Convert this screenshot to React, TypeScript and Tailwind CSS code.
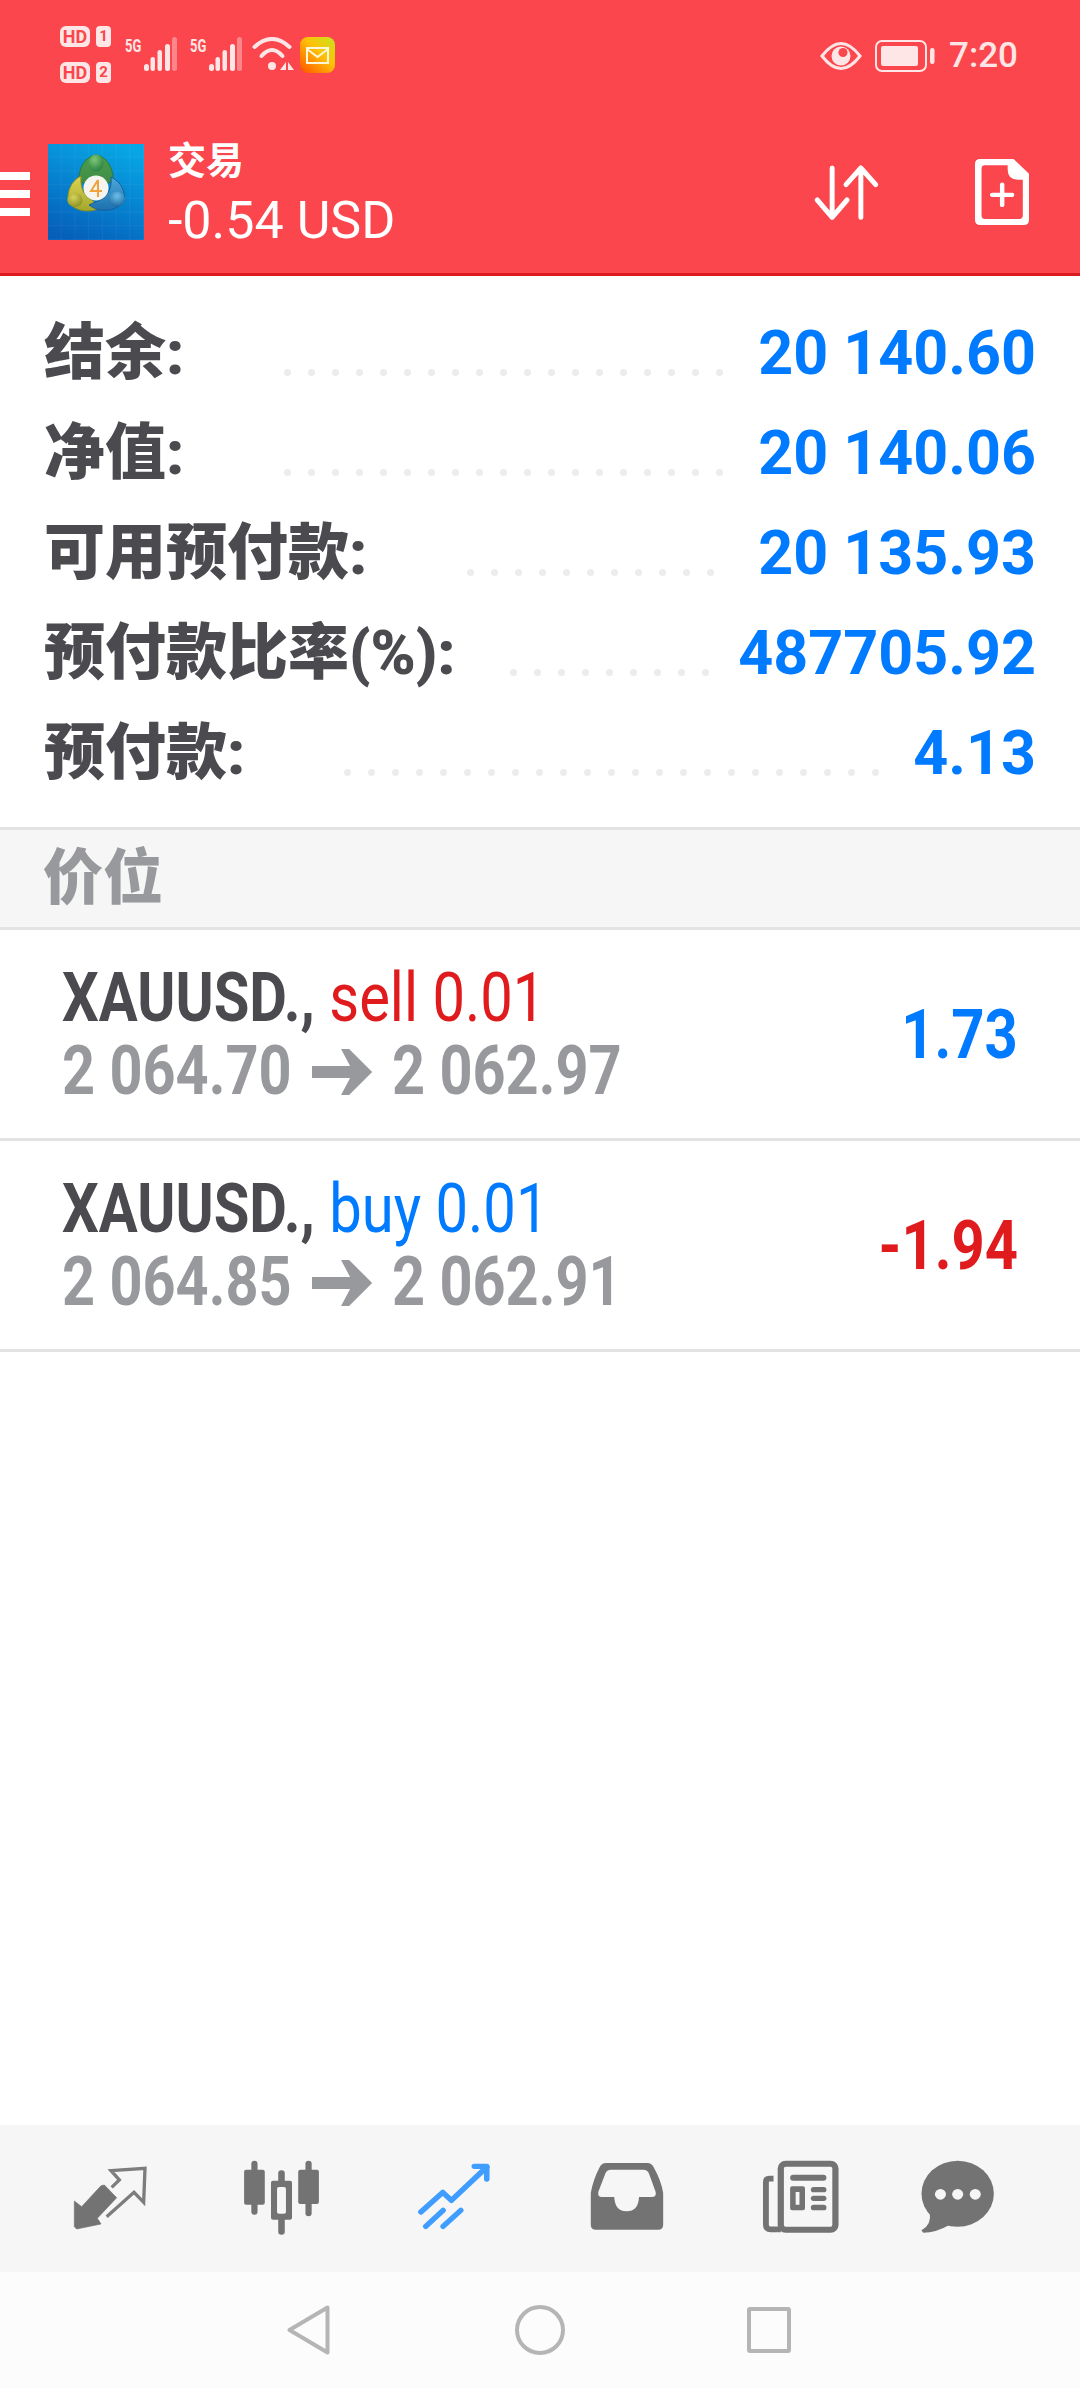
import React from "react";

const infoRows = [
  { label: "结余:", value: "20 140.60", dots: 19, w: "w-[240px]" },
  { label: "净值:", value: "20 140.06", dots: 19, w: "w-[240px]" },
  { label: "可用预付款:", value: "20 135.93", dots: 11, w: "w-[423px]" },
  { label: "预付款比率(%):", value: "487705.92", dots: 9, w: "w-[466px]" },
  { label: "预付款:", value: "4.13", dots: 23, w: "w-[300px]" },
];

const trades = [
  { side: "sell 0.01", sideCls: "text-[#e01b1e]", from: "2 064.70", to: "2 062.97", pnl: "1.73", pnlCls: "text-[#007aff]" },
  { side: "buy 0.01", sideCls: "text-[#007aff]", from: "2 064.85", to: "2 062.91", pnl: "-1.94", pnlCls: "text-[#e01b1e]" },
];

function HdRow({ n }: { n: string }) {
  return (
    <div className="flex h-[21px] gap-[6px]">
      <div className="flex h-[21px] w-[30px] items-center justify-center rounded-[6px] bg-[#ffe6e6] text-[18px] leading-none font-bold text-[#fa464c]">HD</div>
      <div className="flex h-[21px] w-[15px] items-center justify-center rounded-[4px] bg-[#ffe6e6] text-[15px] leading-none font-bold text-[#fa464c]">{n}</div>
    </div>
  );
}

function Signal() {
  return (
    <div className="flex h-[35px] w-[52px] items-start">
      <span className="w-[17px] origin-left scale-x-[0.72] text-[18px] leading-[17px] font-bold whitespace-nowrap text-[#ffe6e6]">5G</span>
      <svg width="35" height="35" viewBox="0 0 35 35">
        <g fill="#ffe6e6">
          <rect x="2" y="27" width="5" height="7" rx="2.5" />
          <rect x="8.5" y="20" width="4.5" height="14" rx="2.2" />
          <rect x="15.5" y="13" width="4.5" height="21" rx="2.2" />
          <rect x="23" y="7" width="5" height="27" rx="2.5" />
          <rect x="30" y="0" width="5" height="34" rx="2.5" opacity="0.4" />
        </g>
      </svg>
    </div>
  );
}

function Wifi() {
  return (
    <svg width="42" height="36" viewBox="0 0 42 36" className="shrink-0">
      <g fill="none" stroke="#ffe6e6" strokeWidth="4" strokeLinecap="round">
        <path d="M2.5 10 Q20 -6 37.5 10" />
        <path d="M9.5 19 Q20 7 30.5 19" />
      </g>
      <circle cx="20" cy="29" r="4" fill="#ffe6e6" />
      <path d="M34 25 V33 H28 Z M36 25 L42 33 H36 Z" fill="#ffe6e6" />
    </svg>
  );
}

function Mail() {
  return (
    <svg width="35" height="36" viewBox="0 0 35 36" className="shrink-0">
      <defs>
        <linearGradient id="mailG" x1="1" y1="0" x2="0.1" y2="1">
          <stop offset="0" stopColor="#c4e61e" />
          <stop offset="0.45" stopColor="#ffc107" />
          <stop offset="1" stopColor="#ff5a00" />
        </linearGradient>
      </defs>
      <rect width="35" height="36" rx="8" fill="url(#mailG)" />
      <rect x="7" y="11" width="21" height="15" fill="none" stroke="#fff8d8" strokeWidth="2" />
      <path d="M7 12 L17.5 20 L28 12" fill="none" stroke="#fff8d8" strokeWidth="2" />
    </svg>
  );
}

function Eye() {
  return (
    <svg width="42" height="28" viewBox="0 0 42 28">
      <path d="M2 14 Q21 -11 40 14 Q21 39 2 14 Z" fill="none" stroke="#ffe6e6" strokeWidth="3" />
      <circle cx="21" cy="14" r="9.5" fill="#ffe6e6" />
      <circle cx="23" cy="10.5" r="4.5" fill="#fa464c" />
    </svg>
  );
}

function Battery() {
  return (
    <svg width="60" height="32" viewBox="0 0 60 32">
      <rect x="1" y="1" width="50" height="30" rx="6" fill="none" stroke="#ffe6e6" strokeWidth="2" />
      <rect x="6" y="6" width="37" height="20" rx="2" fill="#ffe6e6" />
      <rect x="55" y="8" width="4.5" height="16" rx="2.2" fill="#ffe6e6" />
    </svg>
  );
}

function Logo() {
  return (
    <svg width="96" height="96" viewBox="0 0 96 96" className="shrink-0">
      <defs>
        <linearGradient id="bg" x1="0.7" y1="0" x2="0.3" y2="1">
          <stop offset="0" stopColor="#07a6e4" />
          <stop offset="1" stopColor="#0560bc" />
        </linearGradient>
        <pattern id="gr" width="13.7" height="13.7" patternUnits="userSpaceOnUse">
          <path d="M13.7 0 V13.7 H0" fill="none" stroke="#ffffff" strokeOpacity="0.09" strokeWidth="1" />
        </pattern>
        <linearGradient id="gn" x1="0" y1="0" x2="0" y2="1">
          <stop offset="0" stopColor="#4f9c4c" />
          <stop offset="1" stopColor="#3a8a46" />
        </linearGradient>
        <linearGradient id="yl" x1="0" y1="0" x2="0" y2="1">
          <stop offset="0" stopColor="#ded552" />
          <stop offset="1" stopColor="#a3a62c" />
        </linearGradient>
        <linearGradient id="bl" x1="0" y1="0" x2="0" y2="1">
          <stop offset="0" stopColor="#4ea9da" />
          <stop offset="1" stopColor="#1c70ae" />
        </linearGradient>
        <radialGradient id="ball1" cx="0.4" cy="0.3" r="0.8">
          <stop offset="0" stopColor="#7fc777" />
          <stop offset="1" stopColor="#1f7a3a" />
        </radialGradient>
        <radialGradient id="ball2" cx="0.4" cy="0.3" r="0.8">
          <stop offset="0" stopColor="#d8d25a" />
          <stop offset="1" stopColor="#848a1e" />
        </radialGradient>
        <radialGradient id="ball3" cx="0.5" cy="0.3" r="0.8">
          <stop offset="0" stopColor="#6cc0ea" />
          <stop offset="1" stopColor="#14609c" />
        </radialGradient>
      </defs>
      <rect width="96" height="96" fill="url(#bg)" />
      <rect width="96" height="96" fill="url(#gr)" />
      <path d="M48 11 C58 12 66 24 65 37 L48 44 L31 37 C30 24 38 12 48 11 Z" fill="url(#gn)" stroke="#2c7a3c" strokeWidth="1" />
      <path d="M33 32 C23 37 19 47 20 58 C28 68 42 69 52 64 L44 56 C36 52 32 44 33 32 Z" fill="url(#yl)" stroke="#8a8d22" strokeWidth="1" />
      <path d="M63 33 C73 38 78 47 76 58 C66 68 52 69 41 61 L52 56 C60 52 64 44 63 33 Z" fill="url(#bl)" stroke="#155f9a" strokeWidth="1" />
      <ellipse cx="48" cy="19" rx="7.5" ry="8.5" fill="url(#ball1)" />
      <ellipse cx="27" cy="56" rx="7.5" ry="7" fill="url(#ball2)" />
      <ellipse cx="69" cy="55" rx="8" ry="7.5" fill="url(#ball3)" />
      <circle cx="48" cy="44" r="12.5" fill="#f5f4ee" />
      <path d="M50 36 L43 47 H54 M50 36 V53" fill="none" stroke="#f0a23c" strokeWidth="2" />
    </svg>
  );
}

function NavIcon({ w, vb, children }: { w: number; vb: string; children: React.ReactNode }) {
  return (
    <svg width={w} height="90" viewBox={vb} preserveAspectRatio="none" className="shrink-0">
      {children}
    </svg>
  );
}

function InfoRow({ label, value, dots, w }: { label: string; value: string; dots: number; w: string }) {
  return (
    <div className="flex h-[100px] items-center">
      <div className={`${w} shrink-0 text-[61px] leading-none font-black whitespace-nowrap text-[#4a4a4f]`}>{label}</div>
      <div className="mt-[38px] flex gap-[17px]">
        {Array.from({ length: dots }).map((_, i) => (
          <span key={i} className="h-[7px] w-[7px] rounded-full bg-[#ececec]" />
        ))}
      </div>
      <div className="ml-auto text-[61px] leading-none font-bold whitespace-nowrap text-[#007aff]">{value}</div>
    </div>
  );
}

function Arrow() {
  return (
    <svg width="72" height="46" viewBox="0 0 60 46" preserveAspectRatio="none" className="mx-[24px] inline-block align-[-1px]">
      <path d="M0 17 H38 L29 0 H37 L60 23 L37 46 H29 L38 29 H0 Z" fill="#98999c" />
    </svg>
  );
}

function TradeRow({ t }: { t: (typeof trades)[number] }) {
  return (
    <div className="box-content flex h-[208px] items-center justify-between border-b-[3px] border-[#e3e3e3] pr-[62px] pl-[62px]">
      <div className="flex flex-col">
        <div className="h-[73px] origin-left scale-x-[0.84] text-[69px] leading-[73px] whitespace-nowrap">
          <span className="font-bold text-[#4a4a4f]">XAUUSD.,</span> <span className={t.sideCls}>{t.side}</span>
        </div>
        <div className="h-[73px] origin-left scale-x-[0.836] text-[69px] leading-[73px] font-bold whitespace-nowrap text-[#98999c]">
          {t.from}
          <Arrow />
          {t.to}
        </div>
      </div>
      <div className={`origin-right scale-x-[0.84] text-[69px] leading-none font-bold ${t.pnlCls}`}>{t.pnl}</div>
    </div>
  );
}

export default function App() {
  return (
    <div className="flex h-[2388px] w-[1080px] flex-col overflow-hidden bg-white font-['Roboto','Noto_Sans_CJK_SC',sans-serif]">
      <header className="h-[276px] shrink-0 border-b-[3px] border-[#dd1c22] bg-[#fa464c]">
        <div className="flex h-[110px] items-start pt-[26px] pl-[60px]">
          <div className="flex flex-col gap-[15px]">
            <HdRow n="1" />
            <HdRow n="2" />
          </div>
          <div className="mt-[11px] ml-[14px] flex items-start">
            <Signal />
            <div className="ml-[13px]">
              <Signal />
            </div>
            <div className="ml-[10px]">
              <Wifi />
            </div>
            <div className="ml-[6px]">
              <Mail />
            </div>
          </div>
          <div className="mt-[12px] ml-auto flex items-center pr-[62px]">
            <Eye />
            <div className="ml-[13px]">
              <Battery />
            </div>
            <div className="ml-[14px] text-[35px] leading-none font-medium text-[#ffe6e6]">7:20</div>
          </div>
        </div>
        <div className="flex h-[163px] items-center">
          <div className="mt-[4px] flex w-[30px] shrink-0 flex-col gap-[10px]">
            <div className="h-[8px] bg-white" />
            <div className="h-[8px] bg-white" />
            <div className="h-[8px] bg-white" />
          </div>
          <div className="ml-[18px]">
            <Logo />
          </div>
          <div className="mt-[6px] ml-[24px] flex flex-col text-white">
            <div className="text-[38px] leading-[46px] font-bold">交易</div>
            <div className="mt-[6px] text-[52px] leading-[62px]">-0.54 USD</div>
          </div>
          <svg width="66" height="56" viewBox="790 490 200 168" preserveAspectRatio="none" className="ml-auto">
            <g fill="none" stroke="#fff" strokeWidth="15" strokeLinecap="round" strokeLinejoin="round">
              <path d="M845 502 V650 M800 598 L845 650 L890 598" />
              <path d="M932 650 V502 M887 552 L932 502 L977 552" />
            </g>
          </svg>
          <svg width="54" height="66" viewBox="1263 478 157 197" preserveAspectRatio="none" className="mr-[51px] ml-[95px]">
            <path
              fillRule="evenodd"
              fill="#fff"
              d="M1278 478 H1375 L1420 522 V660 Q1420 675 1405 675 H1278 Q1263 675 1263 660 V493 Q1263 478 1278 478 Z M1292 497 Q1282 497 1282 507 V647 Q1282 657 1292 657 H1392 Q1402 657 1402 647 V540 H1390 Q1358 540 1358 510 V497 Z"
            />
            <path d="M1342 555 V615 M1313 585 H1371" stroke="#fff" strokeWidth="13" strokeLinecap="round" fill="none" />
          </svg>
        </div>
      </header>

      <section className="h-[551px] shrink-0 pt-[27px] pr-[44px] pl-[44px]">
        {infoRows.map((r) => (
          <InfoRow key={r.label} {...r} />
        ))}
      </section>

      <div className="box-content flex h-[97px] shrink-0 items-center border-y-[3px] border-[#e3e3e3] bg-[#f6f6f6] pl-[43px] text-[60px] leading-none font-black text-[#98999c]">
        价位
      </div>

      {trades.map((t) => (
        <TradeRow key={t.pnl} t={t} />
      ))}

      <div className="flex-1" />

      <nav className="flex h-[147px] shrink-0 items-start bg-[#f6f6f6] pt-[30px] pl-[65px]">
        <NavIcon w={90} vb="0 0 270 270">
          <path d="M28 138 L50 155 L108 92 L118 90 L155 128 L97 190 L108 207 L35 222 L28 215 Z" fill="#737373" strokeLinejoin="round" stroke="#737373" strokeWidth="2" />
          <path d="M140 97 L163 75 L138 47 L240 40 L236 142 L207 112 L125 185" fill="none" stroke="#7d7d7d" strokeWidth="10" />
        </NavIcon>
        <div className="ml-[86px]">
          <NavIcon w={81} vb="700 136 235 270">
            <g fill="#737373">
              <rect x="730" y="153" width="18" height="162" rx="9" />
              <rect x="709" y="180" width="60" height="105" rx="6" />
              <rect x="808" y="182" width="19" height="193" rx="9" />
              <path fillRule="evenodd" d="M793 213 H842 Q848 213 848 219 V324 Q848 330 842 330 H793 Q787 330 787 324 V219 Q787 213 793 213 Z M811 232 Q805 232 805 238 V306 Q805 312 811 312 H824 Q830 312 830 306 V238 Q830 232 824 232 Z" />
              <rect x="887" y="153" width="18" height="167" rx="9" />
              <rect x="866" y="180" width="60" height="103" rx="6" />
            </g>
            <rect x="805" y="232" width="25" height="80" rx="6" fill="#f6f6f6" />
          </NavIcon>
        </div>
        <div className="ml-[93px]">
          <NavIcon w={78} vb="1205 136 225 270">
            <g fill="none" stroke="#3f9dff" strokeWidth="16" strokeLinecap="round" strokeLinejoin="round">
              <path d="M1222 307 L1285 248 L1310 272 L1412 172" />
              <path d="M1376 170 H1412 V208" />
              <path d="M1236 350 L1286 302" />
              <path d="M1286 350 L1337 302" />
            </g>
          </NavIcon>
        </div>
        <div className="ml-[94px]">
          <NavIcon w={81} vb="135 136 235 270">
            <path
              fillRule="evenodd"
              fill="#737373"
              d="M190 160 H310 Q322 160 328 172 Q350 212 356 250 V345 Q356 360 341 360 H161 Q146 360 146 345 V250 Q152 212 172 172 Q178 160 190 160 Z M205 180 Q192 180 188 192 L168 246 Q165 262 178 262 H214 Q216 305 250 305 Q284 305 286 262 H322 Q338 262 334 246 L315 192 Q311 180 298 180 Z"
            />
          </NavIcon>
        </div>
        <div className="ml-[91px]">
          <NavIcon w={83} vb="635 136 240 270">
            <rect x="698" y="162" width="158" height="198" rx="14" fill="none" stroke="#737373" strokeWidth="18" />
            <path d="M677 207 H665 Q655 207 655 217 V345 Q655 359 669 359 H698" fill="none" stroke="#737373" strokeWidth="17" />
            <g fill="#737373">
              <rect x="725" y="195" width="105" height="18" rx="9" />
              <path fillRule="evenodd" d="M731 230 H762 Q768 230 768 236 V296 Q768 302 762 302 H731 Q725 302 725 296 V236 Q725 230 731 230 Z M741 247 V285 H752 V247 Z" />
              <rect x="785" y="232" width="45" height="16" rx="8" />
              <rect x="785" y="258" width="45" height="16" rx="8" />
              <rect x="785" y="285" width="45" height="17" rx="8" />
            </g>
          </NavIcon>
        </div>
        <div className="ml-[75px]">
          <NavIcon w={81} vb="1095 136 235 270">
            <ellipse cx="1213" cy="252" rx="105" ry="99" fill="#737373" />
            <path d="M1132 310 Q1138 345 1108 362 L1113 369 Q1150 369 1190 345 Z" fill="#737373" />
            <g fill="#f6f6f6">
              <circle cx="1163" cy="254" r="16" />
              <circle cx="1213" cy="254" r="16" />
              <circle cx="1264" cy="254" r="16" />
            </g>
          </NavIcon>
        </div>
      </nav>

      <div className="flex h-[116px] shrink-0 items-center bg-[#fcfcfc] pl-[287px]">
        <svg width="43" height="50" viewBox="0 0 43 50">
          <path d="M40.5 2.5 L2.5 25 L40.5 47.5 Z" fill="none" stroke="#b5b5b5" strokeWidth="4" strokeLinejoin="round" />
        </svg>
        <div className="ml-[185px] h-[50px] w-[50px] rounded-full border-[4px] border-[#b5b5b5]" />
        <div className="ml-[182px] h-[46px] w-[44px] rounded-[3px] border-[4px] border-[#b5b5b5]" />
      </div>
    </div>
  );
}
